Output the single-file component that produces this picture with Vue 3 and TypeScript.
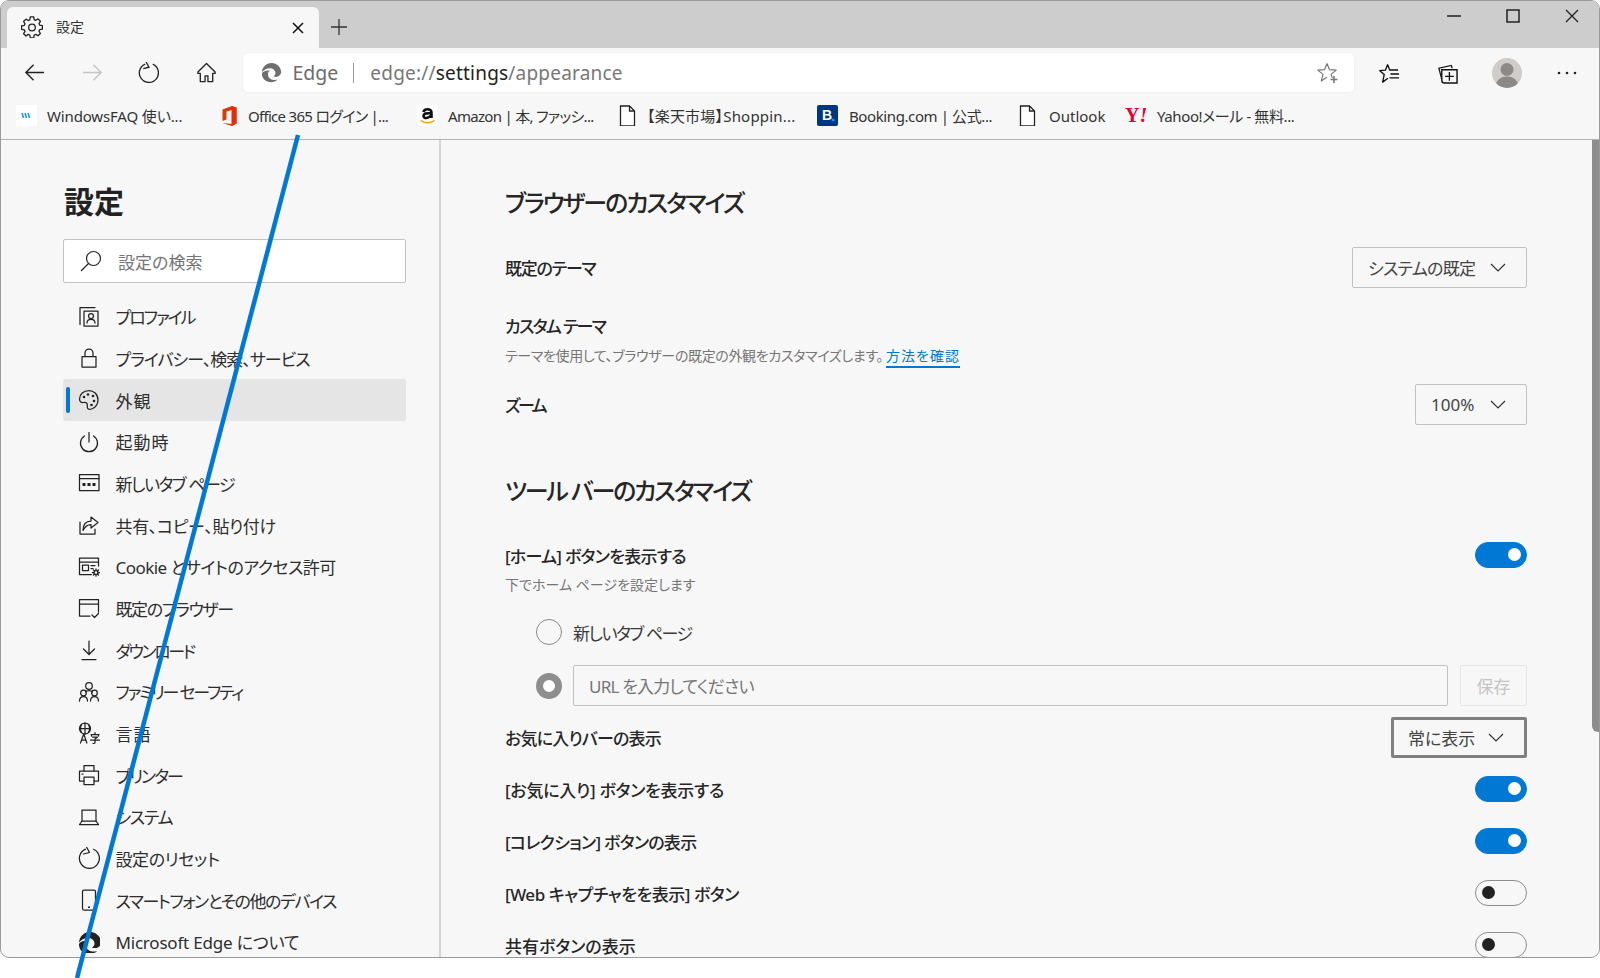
<script setup lang="ts">
const s = 'fill="none" stroke="currentColor" stroke-width="1.25" stroke-linecap="round" stroke-linejoin="round"';
const edge = (c: string) => `<path fill="${c}" d="M1 11.500C1.500 5.500 6 1 12 1c6.500 0 11 5 11 10.500 0 3.500-3 5.500-6 5.500-1.500 0-2.500-.3-3-.6 1.500-.8 2.500-2 2.500-3.600C16.500 9.500 13.800 7 10.500 7 6 7 3 9 1 11.500Z"/><path fill="${c}" d="M1 13.500C1 19 5.500 23 11.500 23c3 0 5.500-1 7.500-3-1.500.5-3 .7-4.500.5-3.500-.3-6.500-2.600-6.500-6.500 0-1.800.8-3.300 2-4.300C5.500 9.500 1 11 1 13.500Z"/>`;
const navIcons: Record<string, string> = {
  profile: `<g ${s}><path d="M2 18.500V1.500h15M6 5h14v15H6Z"/><circle cx="13" cy="10" r="2.500"/><path d="M9 17c0-5 8-5 8 0"/></g>`,
  lock: `<g ${s}><rect x="4" y="9.500" width="14" height="10.500"/><path d="M7 9.500V6a4 4 0 0 1 8 0v3.500"/></g>`,
  palette: `<g ${s}><path d="M11 1.500C5.500 1.500 1.500 5.500 1.500 10c0 3 2 4 4 3.500 2-.5 3-.3 3.500 1 .6 1.500 0 3 .5 4.500.4 1.200 2 1.500 4 1 4-1 6.500-5 6.500-9 0-6-4.500-9.500-9-9.500Z"/></g><g fill="currentColor"><circle cx="6" cy="8" r="1.300"/><circle cx="10" cy="5.500" r="1.300"/><circle cx="15" cy="7" r="1.300"/><circle cx="16" cy="12" r="1.300"/><circle cx="13.500" cy="16" r="1.300"/></g>`,
  power: `<g ${s}><path d="M11 1.500V11"/><path d="M6.500 5a8.500 8.500 0 1 0 9 0"/></g>`,
  tab: `<g ${s}><rect x="1.500" y="2.500" width="19.500" height="16"/><path d="M1.500 6.500h19.500"/></g><g fill="currentColor"><rect x="4.500" y="11" width="3" height="3"/><rect x="9.500" y="11" width="3" height="3"/><rect x="14.500" y="11" width="3" height="3"/></g>`,
  share: `<g ${s}><path d="M2 8v12h15v-5"/><path d="M13 3l7 5.500-7 5.500v-3.500c-4 0-6 1.500-8 6 0-6 3-9.500 8-9.500Z"/></g>`,
  cookie: `<g ${s}><path d="M20.500 10V2H1.500v16.500h12"/><path d="M1.500 6h19"/><rect x="4.500" y="9" width="6" height="5.500"/><path d="M13 9.500h4M13 12.500h2"/><circle cx="18" cy="16.500" r="2"/><path d="M18 12.800v1.700M18 18.500v1.700M14.300 16.500H16M20 16.500h1.700M15.500 14l1 1M19.500 18l1 1M15.500 19l1-1M19.500 15l1-1"/></g>`,
  browser: `<g ${s}><path d="M12 19H1.500V2.500h19V15M1.500 7h19"/><path d="M14 18l2.500 2.500 4-4"/></g>`,
  download: `<g ${s}><path d="M11 2v13M5.500 10l5.500 5.500 5.500-5.500M4 20.500h14"/></g>`,
  family: `<g ${s}><circle cx="11" cy="5" r="3.300"/><circle cx="5.500" cy="12" r="2.800"/><circle cx="16.500" cy="12" r="2.800"/><path d="M1.500 20c0-6 8-6 8 0M12.500 20c0-6 8-6 8 0M7.500 11c1-2 6-2 7 0"/></g>`,
  lang: `<g ${s}><circle cx="7" cy="6.500" r="5.500"/><path d="M1.500 6.500h11M7 1v11M3.500 2.500c-1.500 3-1.500 5.500 0 8M10.500 2.500c1.500 3 1.500 5.500 0 8"/><path d="M2.500 21l3.200-9 3.200 9M3.700 18h4"/><path d="M13 12.500h8M17 10.500v1.500M13.500 12.500v1.500M20.500 12.500v1.500M14.500 15h5l-2.500 2v3.500c0 .8-.7 1-2 1M12.500 18h9"/></g>`,
  printer: `<g ${s}><path d="M6 7V1.500h10V7"/><path d="M6 17H1.500V7h19v10H16"/><rect x="6" y="13" width="10" height="7.500"/><path d="M4 10h1"/></g>`,
  laptop: `<g ${s}><path d="M4 15V4h14v11"/><path d="M1.500 18.500h19l-2.500-3.500H4Z"/></g>`,
  reset: `<g ${s}><path d="M7.500 2.200A10 10 0 1 0 15.500 2.300"/><path d="M8.500 0 11.500 5.500 5.500 7"/></g>`,
  phone: `<g ${s}><rect x="4.500" y="1" width="13" height="20" rx="1.500"/></g><rect x="10" y="17.500" width="2" height="1.500" fill="currentColor"/>`,
  edge: edge("#222"),
};
const nav = [
  { t: "プロファイル", i: "profile", ls: -2 }, { t: "プライバシー、検索、サービス", i: "lock", ls: -1 },
  { t: "外観", i: "palette", active: true, ls: 1 }, { t: "起動時", i: "power", ls: 1 },
  { t: "新しいタブ ページ", i: "tab", ls: -1.47 }, { t: "共有、コピー、貼り付け", i: "share", ls: -0.37 },
  { t: "Cookie とサイトのアクセス許可", i: "cookie", ls: -0.54 }, { t: "既定のブラウザー", i: "browser", ls: -1.4 },
  { t: "ダウンロード", i: "download", ls: -2.4 }, { t: "ファミリー セーフティ", i: "family", ls: -2.2 },
  { t: "言語", i: "lang", ls: 1 }, { t: "プリンター", i: "printer", ls: -2 }, { t: "システム", i: "laptop", ls: -1.3 },
  { t: "設定のリセット", i: "reset", ls: -0.4 }, { t: "スマートフォンとその他のデバイス", i: "phone", ls: -1.46 },
  { t: "Microsoft Edge について", i: "edge", ls: -0.2 },
];
const file = `<path d="M2.500 1h9l5 5v15h-14Z" fill="#fff" stroke="#222" stroke-width="1.300"/><path d="M11.500 1v5h5" fill="none" stroke="#222" stroke-width="1.300"/>`;
const marks = [
  { t: "WindowsFAQ 使い...", w: 203, slot: 31, ls: -0.15, svg: `<rect width="21" height="21" fill="#fff"/><path d="M6 8l1.500 5M9 8l1.500 5M12 8l1.500 5" stroke="#1e9be8" stroke-width="1.600"/>` },
  { t: "Office 365 ログイン |...", w: 198, slot: 29, ls: -0.7, svg: `<path d="M3.500 4.500 13 1l4.500 1.500v16L13 21l-9.500-3 9.500 1V5L7.500 6.500v8l-4 1.500Z" fill="#d83b01"/><path d="M12.500 1.200 17.500 2.500v16l-5 2.500Z" fill="#e8290b"/>` },
  { t: "Amazon | 本, ファッシ...", w: 201, slot: 31, ls: -0.7, svg: `<rect width="21" height="21" rx="2" fill="#fff"/><path d="M3.500 15.500c4 3 10 3 14 0" fill="none" stroke="#f90" stroke-width="1.500"/><path d="M14.500 13V7.500C14.500 3 7 3.500 6.500 7M14.500 8c-4.500 0-8 .5-8 3 0 3 5.500 2.500 8-1" fill="none" stroke="#111" stroke-width="2.600"/>` },
  { t: "【楽天市場】Shoppin...", w: 199, slot: 29, ls: 0.2, svg: file },
  { t: "Booking.com | 公式...", w: 201, slot: 32, ls: -0.4, svg: `<rect width="21" height="21" rx="2" fill="#003580"/><circle cx="16" cy="15" r="1.500" fill="#0896ff"/>`, label: "B" },
  { t: "Outlook", w: 107, slot: 31, ls: 0, svg: file },
  { t: "Yahoo!メール - 無料...", w: 190, slot: 32, ls: -0.4, svg: ``, yahoo: true },
];
</script>

<template>
  <div class="page">
    <div class="window">
      <header class="titlebar">
        <div class="tab">
          <svg class="tab-gear" viewBox="0 0 22 22"><g fill="none" stroke="#222" stroke-width="1.300" stroke-linejoin="round"><path d="M9.300 1.500h3.400l.5 2.700 1.500.7 2.400-1.400 2.300 2.400-1.400 2.300.7 1.600 2.700.5v3.400l-2.700.5-.7 1.500 1.400 2.400-2.400 2.300-2.300-1.400-1.500.6-.5 2.800H9.300l-.5-2.800-1.500-.6L5 20.600l-2.400-2.300L4 15.900l-.7-1.500-2.700-.5v-3.400l2.700-.5.700-1.600-1.400-2.300L5 3.700l2.300 1.400 1.500-.7Z" transform="translate(0 -.6)"/><circle cx="11" cy="11.500" r="3.300"/></g></svg>
          <span class="tab-title">設定</span>
          <svg class="tab-close" viewBox="0 0 12 12"><path d="M1 1l10 10M11 1L1 11" stroke="#111" stroke-width="1.500"/></svg>
        </div>
        <svg class="new-tab" viewBox="0 0 18 18"><path d="M9 1v16M1 9h16" stroke="#333" stroke-width="1.300"/></svg>
        <div class="win-controls">
          <svg viewBox="0 0 14 14"><path d="M0 7h14" stroke="#222" stroke-width="1.500"/></svg>
          <svg viewBox="0 0 14 14"><rect x="1" y="1" width="12" height="12" fill="none" stroke="#222" stroke-width="1.500"/></svg>
          <svg viewBox="0 0 14 14"><path d="M1 1l12 12M13 1L1 13" stroke="#222" stroke-width="1.300"/></svg>
        </div>
      </header>

      <div class="toolbar">
        <button class="tool"><svg viewBox="0 0 22 20"><path d="M21 10H2M10 2l-8 8 8 8" fill="none" stroke="#222" stroke-width="1.500"/></svg></button>
        <button class="tool"><svg viewBox="0 0 22 20"><path d="M1 10h19M12 2l8 8-8 8" fill="none" stroke="#c4c4c4" stroke-width="1.500"/></svg></button>
        <button class="tool tool-refresh"><svg viewBox="0 0 22 22"><path d="M7.500 2.200A10 10 0 1 0 15.500 2.300M8.500 0 11.500 5.500 5.500 7" fill="none" stroke="#222" stroke-width="1.400"/></svg></button>
        <button class="tool"><svg viewBox="0 0 22 22"><path d="M11 1.500 2 10.500V12h2.500v8.500h5v-6h3v6h5V12H20v-1.500Z" fill="none" stroke="#222" stroke-width="1.400" stroke-linejoin="round"/></svg></button>
        <div class="address">
          <svg class="addr-logo" viewBox="0 0 24 24" v-html="edge('#6e6e6e')"></svg>
          <span class="addr-edge">Edge</span>
          <span class="addr-sep"></span>
          <span class="addr-url">edge://<b>settings</b>/appearance</span>
          <svg class="addr-star" viewBox="0 0 22 22"><path d="M10 1.500l2.500 6.200 6.700.4-5.200 4.300 1.400 3.500M10 1.500 7.500 7.700.8 8.100 6 12.400l-1.700 6.500 5.700-3.600" fill="none" stroke="#777" stroke-width="1.200" stroke-linejoin="round"/><path d="M17 14v7M13.500 17.500h7" stroke="#777" stroke-width="1.600"/></svg>
        </div>
        <div class="tools-right">
          <button class="tool2 t-fav"><svg viewBox="0 0 22 22"><path d="M9 1.500l2.200 5.800H20M9 1.500 6.700 7.500.8 8l4.700 4-1.700 8 5.500-4" fill="none" stroke="#111" stroke-width="1.400" stroke-linejoin="round"/><path d="M12 11.500h9M11 15.500h10" stroke="#111" stroke-width="1.400"/></svg></button>
          <button class="tool2 t-coll"><svg viewBox="0 0 22 22"><path d="M5 17.500 2 5.500 15 2.500l1 3" fill="none" stroke="#111" stroke-width="1.300"/><path d="M5 7h16v14H8a3 3 0 0 1-3-3Z" fill="#f7f7f7" stroke="#111" stroke-width="1.500"/><path d="M13 9.500v9M8.500 14h9" stroke="#111" stroke-width="1.400"/></svg></button>
          <button class="tool2"><svg class="avatar" viewBox="0 0 30 30"><defs><clipPath id="avc"><circle cx="15" cy="15" r="15"/></clipPath></defs><circle cx="15" cy="15" r="15" fill="#cfccca"/><g clip-path="url(#avc)" fill="#8c8a88"><circle cx="15" cy="11.500" r="6.500"/><ellipse cx="15" cy="27" rx="11" ry="8.500"/></g></svg></button>
          <button class="tool2"><svg viewBox="0 0 20 6" class="dots"><circle cx="2" cy="3" r="1.300" fill="#222"/><circle cx="10" cy="3" r="1.300" fill="#222"/><circle cx="18" cy="3" r="1.300" fill="#222"/></svg></button>
        </div>
      </div>

      <div class="bookmarks">
        <div v-for="m in marks" :key="m.t" class="mark" :style="{ width: m.w + 'px' }">
          <span class="mark-slot" :style="{ width: m.slot + 'px' }">
            <span v-if="m.yahoo" class="yahoo">Y<i>!</i></span>
            <span v-else class="mark-icon">
              <svg viewBox="0 0 21 21" v-html="m.svg"></svg>
              <span v-if="m.label" class="booking">{{ m.label }}</span>
            </span>
          </span>
          <span class="mark-text" :style="{ letterSpacing: m.ls + 'px' }">{{ m.t }}</span>
        </div>
      </div>

      <div class="main">
        <aside class="sidebar">
          <h1 class="side-title">設定</h1>
          <div class="search">
            <svg viewBox="0 0 22 22"><circle cx="13.500" cy="8.500" r="7" fill="none" stroke="#222" stroke-width="1.200"/><path d="M8.500 13.500 1 21" stroke="#222" stroke-width="1.300"/></svg>
            <span>設定の検索</span>
          </div>
          <nav class="nav">
            <div v-for="n in nav" :key="n.t" class="nav-row" :class="{ active: n.active }">
              <svg class="nav-icon" viewBox="0 0 22 22" v-html="navIcons[n.i]"></svg>
              <span :style="{ letterSpacing: n.ls + 'px' }">{{ n.t }}</span>
            </div>
          </nav>
        </aside>

        <section class="content">
          <h2 class="h-first">ブラウザーのカスタマイズ</h2>
          <div class="row r-theme">
            <span class="label ls-12">既定のテーマ</span>
            <div class="select s-theme"><span class="ls-07">システムの既定</span><svg viewBox="0 0 16 9"><path d="M1 1l7 7 7-7" fill="none" stroke="#333" stroke-width="1.200"/></svg></div>
          </div>
          <div class="label custom">カスタム テーマ</div>
          <div class="desc desc-theme">テーマを使用して、ブラウザーの既定の外観をカスタマイズします。<a class="link">方法を確認</a></div>
          <div class="row r-zoom">
            <span class="label ls-27">ズーム</span>
            <div class="select s-zoom"><span>100%</span><svg viewBox="0 0 16 9"><path d="M1 1l7 7 7-7" fill="none" stroke="#333" stroke-width="1.200"/></svg></div>
          </div>

          <h2 class="h-second">ツール バーのカスタマイズ</h2>
          <div class="row r-home">
            <span class="label ls-07">[ホーム] ボタンを表示する</span>
            <span class="toggle on"></span>
          </div>
          <div class="desc sub">下でホーム ページを設定します</div>
          <div class="radio-row rr1">
            <span class="radio"></span>
            <span class="radio-label">新しいタブ ページ</span>
          </div>
          <div class="radio-row rr2">
            <span class="radio checked"></span>
            <div class="url-input">URL を入力してください</div>
            <div class="save">保存</div>
          </div>
          <div class="row r-fav">
            <span class="label ls-08">お気に入りバーの表示</span>
            <div class="select s-fav"><span>常に表示</span><svg viewBox="0 0 16 9"><path d="M1 1l7 7 7-7" fill="none" stroke="#333" stroke-width="1.200"/></svg></div>
          </div>
          <div class="row r-t r-t1"><span class="label ls-03">[お気に入り] ボタンを表示する</span><span class="toggle on"></span></div>
          <div class="row r-t"><span class="label ls-07">[コレクション] ボタンの表示</span><span class="toggle on"></span></div>
          <div class="row r-t"><span class="label ls-05">[Web キャプチャをを表示] ボタン</span><span class="toggle"></span></div>
          <div class="row r-t"><span class="label">共有ボタンの表示</span><span class="toggle"></span></div>
        </section>
        <div class="scroll"><div class="thumb"></div></div>
      </div>
    </div>
    <svg class="pointer" viewBox="0 0 1600 978"><path d="M298 135 77 978" stroke="#0078d4" stroke-width="4.500" fill="none"/></svg>
  </div>
</template>

<style>
html, body { margin: 0; background: #fff; }
</style>

<style scoped>
* { box-sizing: border-box; }
.page {
  position: relative; width: 1600px; height: 978px; overflow: hidden; background: #fff;
  font-family: "Noto Sans", "Noto Sans CJK JP", sans-serif; font-feature-settings: "palt"; color: #2a2a2a;
}
.window {
  width: 1600px; height: 958px; border: 1px solid #9a9a9a; border-radius: 9px; overflow: hidden;
  background: #f7f7f7; display: flex; flex-direction: column;
}
button { border: 0; background: none; padding: 0; display: flex; align-items: center; justify-content: center; }

.titlebar { height: 47px; background: #cdcdcd; display: flex; align-items: flex-start; flex: none; }
.tab {
  margin: 6px 0 0 6px; width: 312px; height: 41px; background: #f7f7f7; border-radius: 6px 6px 0 0;
  display: flex; align-items: center; padding: 0 15px 2px 14px;
}
.tab-gear { width: 22px; height: 22px; }
.tab-title { margin: -2px 0 0 13px; font-size: 14px; color: #333; flex: 1; }
.tab-close { width: 12px; height: 12px; margin-top: 3px; }
.new-tab { width: 18px; height: 18px; margin: 17px 0 0 11px; }
.win-controls { margin-left: auto; display: flex; gap: 45px; padding: 8px 20px 0 0; }
.win-controls svg { width: 14px; height: 14px; }

.toolbar { height: 48px; display: flex; flex: none; padding-left: 5px; }
.tool { width: 57.500px; height: 48px; }
.tool svg { width: 21px; height: 21px; }
.tool-refresh { margin-left: -1px; }
.address {
  width: 1111px; height: 39px; margin: 5px 0 0 7.500px; background: #fff; border-radius: 5px;
  display: flex; align-items: center; padding-left: 18px; box-shadow: 0 0 3px rgba(0,0,0,.06);
}
.addr-logo { width: 21px; height: 21px; }
.addr-edge { margin-left: 11px; font-size: 19.500px; color: #6b6b6b; }
.addr-sep { width: 1px; height: 20px; background: #9a9a9a; margin-left: 15px; }
.addr-url { margin-left: 16px; font-size: 19px; letter-spacing: .2px; color: #777; flex: 1; }
.addr-url b { font-weight: 400; color: #222; }
.addr-star { width: 22px; height: 22px; margin-right: 15px; }
.tools-right { display: flex; margin-left: 7.500px; padding-top: 1px; }
.tool2 { width: 60px; height: 48px; }
.t-fav { width: 57px; }
.t-coll { width: 59px; }
.tool2 svg { width: 21px; height: 21px; }
.tool2 .avatar { width: 30px; height: 30px; }
.tool2 .dots { width: 20px; height: 6px; }

.bookmarks {
  height: 44px; flex: none; display: flex; align-items: center; padding: 0 0 4px 15px;
  border-bottom: 1px solid #b4b4b4; font-size: 15px; color: #333;
}
.mark { display: flex; align-items: center; flex: none; }
.mark-slot { flex: none; display: flex; }
.mark-icon { position: relative; width: 21px; height: 21px; display: block; }
.mark-icon svg { width: 21px; height: 21px; display: block; }
.booking { position: absolute; left: 5px; top: 1px; font: 700 14px/19px "Liberation Sans", sans-serif; color: #fff; }
.yahoo { font: 700 20px/21px "Liberation Serif", serif; color: #e60033; }
.mark-text { white-space: nowrap; }

.main { flex: 1; display: flex; min-height: 0; }
.sidebar { width: 440px; flex: none; border-right: 2px solid #d4d4d4; padding: 45px 0 0 62px; }
.side-title { margin: 0; font-size: 30px; line-height: 34px; font-weight: 700; color: #222; padding-left: 1px; }
.search {
  margin-top: 20px; width: 343px; height: 44px; background: #fff; border: 1.500px solid #c2c2c2; border-radius: 2px;
  display: flex; align-items: center; padding-left: 16px; font-size: 17px; color: #767676;
}
.search svg { width: 22px; height: 22px; margin-right: 16px; }
.nav { margin-top: 13px; }
.nav-row {
  width: 343px; height: 41.670px; display: flex; align-items: center; padding-left: 15px;
  font-size: 17px; color: #2e2e2e; white-space: nowrap; position: relative; border-radius: 2px;
}
.nav-row.active { background: #e5e5e5; }
.nav-row.active::before {
  content: ""; position: absolute; left: 3px; top: 8px; bottom: 8px; width: 4px; background: #0078d4; border-radius: 2px;
}
.nav-icon { width: 22px; height: 22px; margin-right: 15.500px; flex: none; color: #222; }

.content { flex: 1; min-width: 0; padding: 0 65px 0 64px; overflow: hidden; }
h2 { margin: 0; font-size: 24px; line-height: 40px; font-weight: 500; color: #262626; }
.h-first { margin-top: 43px; letter-spacing: -2px; }
.h-second { margin-top: 46px; letter-spacing: -2.100px; }
.row { display: flex; align-items: center; justify-content: space-between; }
.label { font-size: 17px; font-weight: 500; color: #262626; white-space: nowrap; }
.ls-03 { letter-spacing: -.25px; }
.ls-05 { letter-spacing: -.45px; }
.ls-07 { letter-spacing: -.72px; }
.ls-08 { letter-spacing: -.8px; }
.ls-12 { letter-spacing: -1.200px; }
.ls-27 { letter-spacing: -2.700px; }
.r-theme { margin-top: 24px; height: 41px; }
.custom { margin-top: 26px; line-height: 26px; letter-spacing: -1.660px; }
.desc { font-size: 14px; color: #767676; line-height: 22px; margin-top: 5px; }
.desc-theme { letter-spacing: -.35px; }
.link { color: #0078d4; border-bottom: 2px solid #0078d4; margin-left: 3px; padding-bottom: 1px; letter-spacing: 1px; }
.r-zoom { margin-top: 17px; height: 41px; }
.select {
  display: flex; align-items: center; height: 41px; font-size: 17px; color: #444; background: #f7f7f7;
  border: 1.500px solid #c2c2c2; border-radius: 2px; padding-left: 15px;
}
.select svg { width: 16px; height: 9px; margin-left: auto; margin-right: 20px; }
.s-theme { width: 175px; }
.s-zoom { width: 112px; }
.s-fav { width: 136px; height: 41px; border: 3px solid #808080; padding-left: 14px; }
.r-home { margin-top: 31px; height: 26px; }
.toggle {
  width: 52px; height: 26px; border-radius: 13px; border: 1.500px solid #8d8d8d; position: relative; flex: none; display: block;
}
.toggle::after {
  content: ""; position: absolute; width: 13px; height: 13px; border-radius: 50%; background: #222; top: 5px; left: 5.500px;
}
.toggle.on { background: #0078d4; border-color: #0078d4; }
.toggle.on::after { background: #fff; left: auto; right: 5.500px; }
.sub { margin-top: 7px; line-height: 20px; }
.radio-row { display: flex; align-items: center; padding-left: 31px; }
.rr1 { margin-top: 23px; height: 28px; }
.rr2 { margin-top: 19px; height: 41px; }
.radio { width: 26px; height: 26px; border-radius: 50%; border: 1.500px solid #8a8a8a; flex: none; background: #f7f7f7; }
.radio.checked { border: 7px solid #8e8e8e; background: #fff; }
.radio-label { margin-left: 11px; font-size: 17px; color: #3a3a3a; letter-spacing: -1.470px; }
.url-input {
  margin-left: 11px; width: 875px; height: 41px; border: 1.500px solid #c2c2c2; border-radius: 2px; font-size: 17px; color: #767676;
  display: flex; align-items: center; padding-left: 15px; letter-spacing: -.8px;
}
.save {
  margin-left: 12px; width: 67px; height: 41px; border: 1.500px solid #e6e6e6; border-radius: 2px; font-size: 17px; color: #c4c4c4;
  display: flex; align-items: center; justify-content: center;
}
.r-fav { margin-top: 11px; height: 41px; }
.r-t { margin-top: 26px; height: 26px; }
.r-t1 { margin-top: 18px; }

.scroll { width: 7px; flex: none; }
.thumb { height: 592px; background: #8d8d8d; border-radius: 0 0 0 6px; }

.pointer { position: absolute; inset: 0; width: 1600px; height: 978px; pointer-events: none; }
</style>
